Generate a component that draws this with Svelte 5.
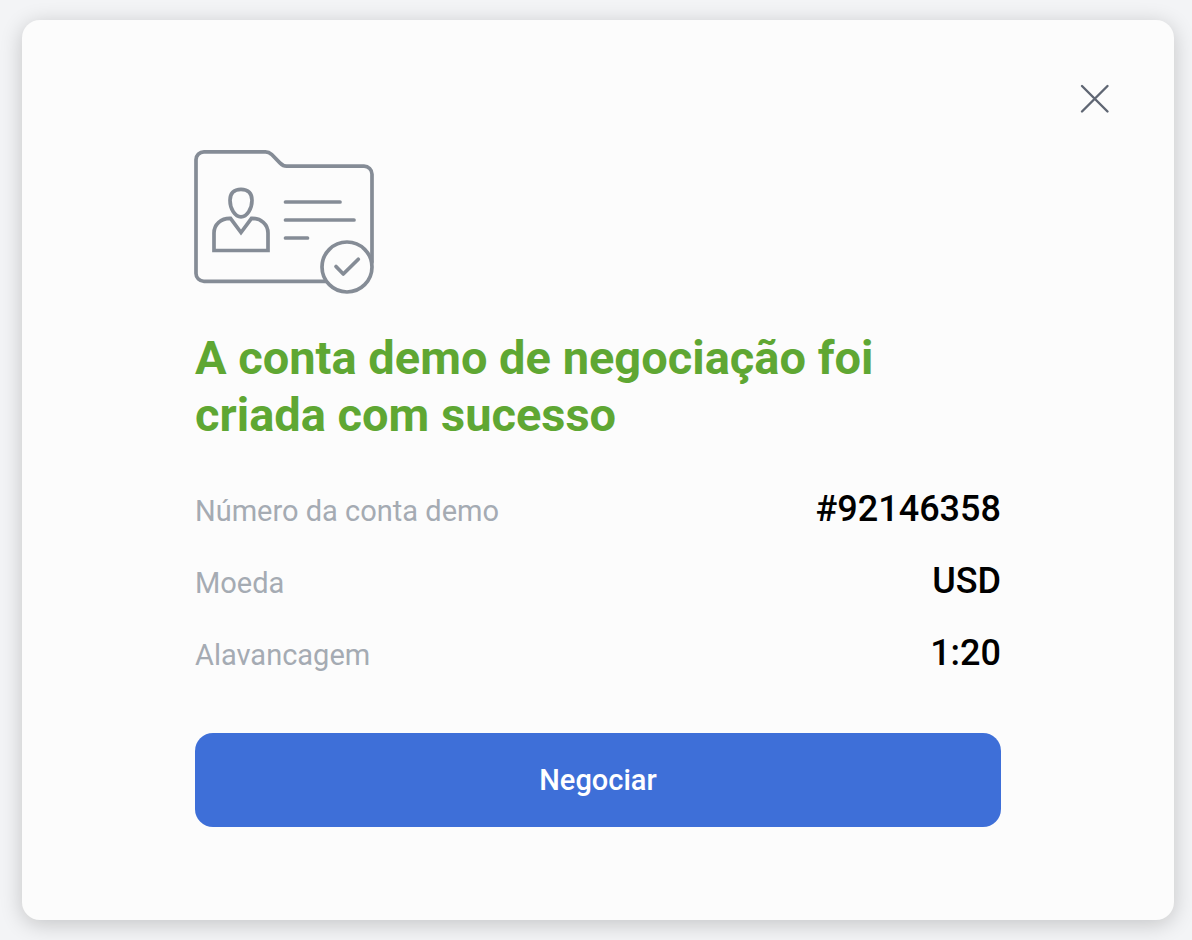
<script lang="ts">
  let open = $state(true);

  const details = [
    { label: "Número da conta demo", value: "#92146358" },
    { label: "Moeda", value: "USD" },
    { label: "Alavancagem", value: "1:20" },
  ];
</script>

{#if open}
  <div class="modal" role="dialog" aria-labelledby="modal-title">
    <header class="modal-header">
      <button class="close-button" type="button" aria-label="Fechar" onclick={() => (open = false)}>
        <svg viewBox="0 0 30 30" aria-hidden="true">
          <path d="M2 2 27.500 27.500M27.500 2 2 27.500" />
        </svg>
      </button>
    </header>

    <div class="modal-body">
      <svg class="account-icon" viewBox="0 0 180 144" aria-hidden="true">
        <path
          d="M131 131.400H9a8 8 0 0 1-8-8V9.800a8 8 0 0 1 8-8H70.500c2.400 0 4.200.8 6 2.500l8.400 8.600c2 2 4 3.300 6.600 3.300H169a8 8 0 0 1 8 8V112"
        />
        <path d="M46 39.300c-7.500 0-11 4.500-11 11 0 8.500 5 16.600 11 16.600s11-8.100 11-16.600c0-6.500-3.500-11-11-11Z" />
        <path
          stroke-linejoin="miter"
          d="M35.500 68.300 46 82.500l10.500-14.200c9.500-.3 16.500 6 16.500 14.700v17.500H19V83c0-8.700 7-15 16.500-14.700Z"
        />
        <path d="M90.500 52H145M90.500 70H159M90.500 88H112.500" />
        <circle cx="152" cy="117" r="25" />
        <path d="m141 116.500 7.300 7.500 15-14.800" />
      </svg>

      <h1 id="modal-title">A conta demo de negociação foi criada com sucesso</h1>

      <dl class="details">
        {#each details as item}
          <div class="detail-row">
            <dt>{item.label}</dt>
            <dd>{item.value}</dd>
          </div>
        {/each}
      </dl>

      <button class="primary-button" type="button">Negociar</button>
    </div>
  </div>
{/if}

<style>
  :global(body) {
    background: #f3f4f6;
    font-family: Roboto, "Liberation Sans", sans-serif;
  }

  .modal {
    margin: 20px 18px 20px 22px;
    padding: 64px 64px 93px;
    border-radius: 18px;
    background: #fcfcfc;
    box-shadow: 0 4px 22px rgba(0, 0, 0, 0.2);
  }

  .modal-header {
    display: flex;
    justify-content: flex-end;
  }

  .close-button {
    width: 30px;
    height: 30px;
    padding: 0;
    border: 0;
    background: none;
    cursor: pointer;
  }

  .close-button svg {
    display: block;
    fill: none;
    stroke: #5f6673;
    stroke-width: 2.4;
    stroke-linecap: round;
  }

  .modal-body {
    padding: 36px 109px 0;
  }

  .account-icon {
    display: block;
    width: 180px;
    height: 144px;
    overflow: visible;
    fill: none;
    stroke: #858c96;
    stroke-width: 3.7;
    stroke-linecap: round;
    stroke-linejoin: round;
  }

  h1 {
    max-width: 720px;
    margin: 35px 0 0;
    color: #5fa733;
    font-size: 47px;
    font-weight: 700;
    line-height: 57px;
  }

  .details {
    display: flex;
    flex-direction: column;
    gap: 26px;
    margin: 44px 0 0;
  }

  .detail-row {
    display: flex;
    align-items: baseline;
    justify-content: space-between;
    line-height: 44px;
  }

  dt {
    color: #a5abb3;
    font-size: 29px;
  }

  dd {
    margin: 0;
    color: #000;
    font-size: 36px;
    font-weight: 500;
  }

  .primary-button {
    display: block;
    width: 100%;
    margin-top: 56px;
    padding: 30px 24px;
    border: 0;
    border-radius: 18px;
    background: #3e6fd8;
    color: #fff;
    font-family: inherit;
    font-size: 29px;
    font-weight: 500;
    line-height: 34px;
    cursor: pointer;
  }
</style>
